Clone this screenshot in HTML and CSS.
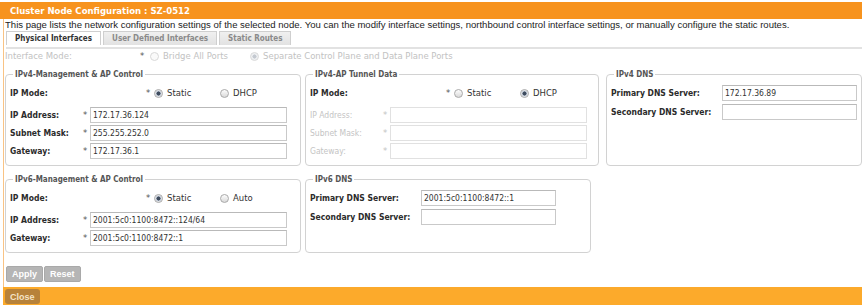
FILE: index.html
```html
<!DOCTYPE html>
<html>
  <head>
    <title>Cluster Node Configuration</title>
    <link rel="stylesheet" href="styles.css">
  </head>
  <body>

    <div class="dialog">
      <div class="dialog-title">Cluster Node Configuration : SZ-0512</div>

      <div class="dialog-body">
        <p class="intro">This page lists the network configuration settings of the selected node. You can the modify interface settings, northbound control interface settings, or manually configure the static routes.</p>

        <div class="tabs">
          <span class="tab active">Physical Interfaces</span>
          <span class="tab">User Defined Interfaces</span>
          <span class="tab">Static Routes</span>
        </div>

        <div class="iface-mode">
          <span class="iface-label">Interface Mode:</span>
          <span class="req">*</span>
          <span class="option option-wide"><span class="radio"></span>Bridge All Ports</span>
          <span class="option"><span class="radio checked"></span>Separate Control Plane and Data Plane Ports</span>
        </div>

        <div class="panel-row">
          <fieldset class="box box-mgmt">
            <legend>IPv4-Management &amp; AP Control</legend>
            <div class="mode-row">
              <span class="label">IP Mode:</span>
              <span class="req">*</span>
              <span class="option option-first"><span class="radio checked"></span>Static</span>
              <span class="option"><span class="radio"></span>DHCP</span>
            </div>
            <div class="field"><span class="label">IP Address:</span><span class="req">*</span><span class="input">172.17.36.124</span></div>
            <div class="field"><span class="label">Subnet Mask:</span><span class="req">*</span><span class="input">255.255.252.0</span></div>
            <div class="field"><span class="label">Gateway:</span><span class="req">*</span><span class="input">172.17.36.1</span></div>
          </fieldset>

          <fieldset class="box box-tunnel">
            <legend>IPv4-AP Tunnel Data</legend>
            <div class="mode-row">
              <span class="label">IP Mode:</span>
              <span class="req">*</span>
              <span class="option option-first"><span class="radio"></span>Static</span>
              <span class="option"><span class="radio checked"></span>DHCP</span>
            </div>
            <div class="field disabled"><span class="label">IP Address:</span><span class="req">*</span><span class="input"></span></div>
            <div class="field disabled"><span class="label">Subnet Mask:</span><span class="req">*</span><span class="input"></span></div>
            <div class="field disabled"><span class="label">Gateway:</span><span class="req">*</span><span class="input"></span></div>
          </fieldset>

          <fieldset class="box box-dns4">
            <legend>IPv4 DNS</legend>
            <div class="dns-field"><span class="label">Primary DNS Server:</span><span class="input">172.17.36.89</span></div>
            <div class="dns-field"><span class="label">Secondary DNS Server:</span><span class="input"></span></div>
          </fieldset>
        </div>

        <div class="panel-row">
          <fieldset class="box box-mgmt">
            <legend>IPv6-Management &amp; AP Control</legend>
            <div class="mode-row">
              <span class="label">IP Mode:</span>
              <span class="req">*</span>
              <span class="option option-first"><span class="radio checked"></span>Static</span>
              <span class="option"><span class="radio"></span>Auto</span>
            </div>
            <div class="field"><span class="label">IP Address:</span><span class="req">*</span><span class="input">2001:5c0:1100:8472::124/64</span></div>
            <div class="field"><span class="label">Gateway:</span><span class="req">*</span><span class="input">2001:5c0:1100:8472::1</span></div>
          </fieldset>

          <fieldset class="box box-dns6">
            <legend>IPv6 DNS</legend>
            <div class="dns-field"><span class="label">Primary DNS Server:</span><span class="input">2001:5c0:1100:8472::1</span></div>
            <div class="dns-field"><span class="label">Secondary DNS Server:</span><span class="input"></span></div>
          </fieldset>
        </div>

        <div class="actions">
          <button class="btn-gray">Apply</button>
          <button class="btn-gray">Reset</button>
        </div>
      </div>

      <div class="dialog-foot">
        <button class="btn-close">Close</button>
      </div>
    </div>

  </body>
</html>
```

FILE: styles.css
```css
body{
  margin: 0;
  padding-top: 2px;
  background: #fff;
  font-family: "DejaVu Sans", sans-serif;
  font-size: 8.5px;
  color: #333;
}
p{
  margin: 0;
}
.dialog{
  width: 862px;
}
.dialog-title{
  height: 17px;
  line-height: 17px;
  background-color: #f7931e;
  color: #fff;
  font-family: "DejaVu Sans Condensed", "DejaVu Sans", sans-serif;
  font-stretch: condensed;
  font-weight: bold;
  font-size: 9.5px;
  padding-left: 10px;
}
.dialog-body{
  margin-left: 3px;
  border-left: 1px solid #f9c384;
  padding-left: 1px;
}
.intro{
  font-family: "Liberation Sans", Arial, sans-serif;
  font-size: 9.55px;
  line-height: 11px;
  color: #222;
}
.tabs{
  display: flex;
  gap: 2px;
  margin-top: 1px;
  margin-left: 1px;
  padding-bottom: 2px;
  border-bottom: 2px solid #e2e2e2;
}
.tab{
  height: 14px;
  line-height: 14px;
  box-sizing: border-box;
  padding: 0 8px;
  border: 1px solid #cfcfcf;
  border-bottom: none;
  background: linear-gradient(#f0f0f0, #e2e2e2);
  color: #8a8a8a;
  font-family: "DejaVu Sans Condensed", "DejaVu Sans", sans-serif;
  font-stretch: condensed;
  font-weight: bold;
  font-size: 8px;
}
.tab.active{
  background: #fff;
  color: #333;
}
.iface-mode{
  display: flex;
  align-items: center;
  height: 14px;
  margin-bottom: 6px;
  color: #c2c2c2;
}
.iface-label{
  width: 135px;
}
.iface-mode .req{
  width: 10px;
}
.option{
  display: flex;
  align-items: center;
  gap: 4px;
}
.option-wide{
  width: 100px;
}
.radio{
  display: inline-block;
  width: 9px;
  height: 9px;
  box-sizing: border-box;
  border-radius: 50%;
  border: 1px solid #a9a9a9;
  background: linear-gradient(#fdfdfd, #d9d9d9);
}
.radio.checked{
  background: radial-gradient(circle, #3e4b5e 0 1.8px, #c9d1dc 2.3px 2.8px, #f3f3f3 3.3px);
}
.iface-mode .radio{
  border-color: #d9d9d9;
  background: #fafafa;
}
.iface-mode .radio.checked{
  background: radial-gradient(circle, #c4c9d0 0 1.8px, #eef0f2 2.3px);
}

/* fieldsets */
.panel-row{
  display: flex;
  align-items: stretch;
  margin-bottom: 8px;
}
.box{
  box-sizing: border-box;
  margin: 0;
  padding: 5px 4px 6px 4px;
  border: 1px solid #d2d2d2;
  border-radius: 4px;
}
.box legend{
  padding: 0 2px;
  margin-left: 3px;
  line-height: 11px;
  color: #555;
  font-family: "DejaVu Sans Condensed", "DejaVu Sans", sans-serif;
  font-stretch: condensed;
  font-weight: bold;
  font-size: 8px;
}
.box-mgmt{
  width: 296px;
  margin-right: 4px;
}
.box-tunnel{
  width: 294px;
  margin-right: 7px;
}
.box-dns4{
  width: 256px;
}
.box-dns6{
  width: 286px;
}
.label{
  font-family: "DejaVu Sans Condensed", "DejaVu Sans", sans-serif;
  font-stretch: condensed;
  font-weight: bold;
  color: #2b2b2b;
}
.req{
  color: #555;
}
.mode-row{
  display: flex;
  align-items: center;
  height: 16px;
  margin-bottom: 6px;
}
.mode-row .label{
  width: 136px;
}
.mode-row .req{
  width: 8px;
}
.option-first{
  width: 66px;
}
.field{
  display: grid;
  grid-template-columns: 73px 7px 197px;
  align-items: center;
  height: 16px;
  margin-bottom: 2px;
}
.field:last-child{
  margin-bottom: 0;
}
.input{
  display: block;
  height: 16px;
  line-height: 14px;
  box-sizing: border-box;
  border: 1px solid #c9c9c9;
  border-top-color: #b9b9b9;
  padding-left: 2px;
  background: #fff;
  color: #333;
  font-family: "DejaVu Sans Condensed", "DejaVu Sans", sans-serif;
  font-stretch: condensed;
}
.field.disabled .label,
.field.disabled .req{
  color: #c4c4c4;
  font-weight: normal;
}
.field.disabled .input{
  border-color: #e1e1e1;
}
.dns-field{
  display: grid;
  grid-template-columns: 111px 135px;
  align-items: center;
  height: 16px;
  margin-bottom: 3px;
}

/* buttons */
.actions{
  display: flex;
  gap: 1px;
  margin-top: 13px;
  margin-left: 1px;
  padding-bottom: 5px;
}
button{
  font-family: "Liberation Sans", Arial, sans-serif;
  font-weight: bold;
  font-size: 9px;
  cursor: pointer;
}
.btn-gray{
  height: 16px;
  padding: 0 5px;
  border: 1px solid #a9a9a9;
  border-radius: 2px;
  background-color: #b5b5b5;
  color: #fff;
}
.dialog-foot{
  margin-left: 3px;
  height: 18px;
  padding: 2px 0 0 2px;
  box-sizing: border-box;
  background-color: #fcaa2b;
}
.btn-close{
  height: 15px;
  padding: 0 5px;
  border: none;
  border-radius: 3px;
  background-color: #b7823a;
  color: #f4e4c7;
}
```
